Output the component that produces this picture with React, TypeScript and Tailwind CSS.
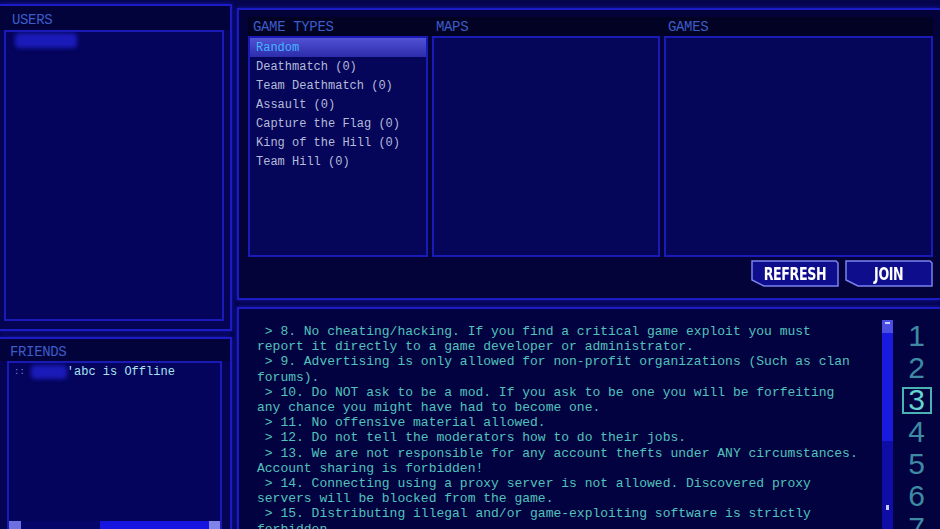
import React from "react";

const mono = "font-['Liberation_Mono','DejaVu_Sans_Mono',monospace]";

const gameTypes = [
  "Random",
  "Deathmatch (0)",
  "Team Deathmatch (0)",
  "Assault (0)",
  "Capture the Flag (0)",
  "King of the Hill (0)",
  "Team Hill (0)",
];

const rules = [
  " > 8. No cheating/hacking. If you find a critical game exploit you must",
  "report it directly to a game developer or administrator.",
  " > 9. Advertising is only allowed for non-profit organizations (Such as clan",
  "forums).",
  " > 10. Do NOT ask to be a mod. If you ask to be one you will be forfeiting",
  "any chance you might have had to become one.",
  " > 11. No offensive material allowed.",
  " > 12. Do not tell the moderators how to do their jobs.",
  " > 13. We are not responsible for any account thefts under ANY circumstances.",
  "Account sharing is forbidden!",
  " > 14. Connecting using a proxy server is not allowed. Discovered proxy",
  "servers will be blocked from the game.",
  " > 15. Distributing illegal and/or game-exploiting software is strictly",
  "forbidden.",
];

const SectionLabel = ({ children }: { children: React.ReactNode }) => (
  <span className={`${mono} text-[14px] leading-none text-[#3d5cc8] tracking-tight`}>{children}</span>
);

const CutButton = ({ label }: { label: string }) => (
  <button className="relative w-[88px] h-[27px] flex items-center justify-center">
    <svg className="absolute inset-0" width="88" height="27" viewBox="0 0 88 27">
      <polygon
        points="1,1 85,1 87,3 87,26 13,26 1,20"
        fill="#0e0e8c"
        stroke="#7b82ee"
        strokeWidth="1.5"
      />
    </svg>
    <span className="relative font-['Liberation_Sans_Narrow','DejaVu_Sans_Condensed','Liberation_Sans',sans-serif] font-bold text-[18px] leading-none text-white tracking-[-0.5px] scale-x-[0.78]">
      {label}
    </span>
  </button>
);

export default function App() {
  return (
    <div className="w-[940px] h-[529px] overflow-hidden bg-[#05054e] flex">
      {/* left column */}
      <div className="w-[232px] shrink-0 flex flex-col">
        <div className="mt-[4px] h-[327px] shrink-0 border-t-2 border-r-2 border-b-2 border-[#1c1cc4] bg-[#040452] flex flex-col shadow-[0_0_4px_#1616b0]">
          <div className="h-[24px] shrink-0 bg-[#03033c] pl-[12px] pt-[4px] flex items-center">
            <SectionLabel>USERS</SectionLabel>
          </div>
          <div className="ml-[4px] mr-[6px] mb-[8px] flex-1 border-2 border-[#1a1ab6] bg-[#04045c] pt-[1px] pl-[9px]">
            <div className="w-[62px] h-[15px] rounded-[4px] bg-[#1a1ab8] blur-[2px]" />
          </div>
        </div>
        <div className="mt-[6px] flex-1 min-h-0 border-t-2 border-r-2 border-[#1c1cc4] bg-[#040452] flex flex-col shadow-[0_0_4px_#1616b0]">
          <div className="h-[22px] shrink-0 bg-[#03033c] pl-[10px] pt-[4px] flex items-center">
            <SectionLabel>FRIENDS</SectionLabel>
          </div>
          <div className="ml-[7px] mr-[8px] flex-1 border-2 border-b-0 border-[#1a1ab6] bg-[#04045c] flex flex-col">
            <div className={`pl-[5px] pt-[2px] ${mono} text-[12px] leading-[14px] text-[#a8e2f2] flex items-center`}>
              <span className="text-[#7a8ad8] text-[9px]">::</span>
              <span className="w-[36px] h-[14px] ml-[6px] rounded-[4px] bg-[#1a1ab8] blur-[2px]" />
              <span className="whitespace-pre">'abc is Offline</span>
            </div>
            <div className="flex-1" />
            <div className="h-[8px] shrink-0 flex items-stretch bg-[#05056a]">
              <div className="w-[12px] bg-[#6c70e0]" />
              <div className="w-[79px]" />
              <div className="w-[109px] bg-[#1616e0]" />
              <div className="flex-1 bg-[#8084e8]" />
            </div>
          </div>
        </div>
      </div>

      {/* right column */}
      <div className="ml-[5px] flex-1 flex flex-col">
        <div className="mt-[8px] h-[292px] shrink-0 border-2 border-r-0 border-[#1c1cc4] bg-[#03033a] pl-[9px] pr-[7px] pt-[7px] shadow-[0_0_4px_#1616b0]">
          <div className="h-[19px] bg-[#020224] flex items-center pb-[3px]">
            <div className="w-[184px] pl-[5px]">
              <SectionLabel>GAME TYPES</SectionLabel>
            </div>
            <div className="w-[232px] pl-[4px]">
              <SectionLabel>MAPS</SectionLabel>
            </div>
            <div className="pl-[4px]">
              <SectionLabel>GAMES</SectionLabel>
            </div>
          </div>
          <div className="h-[221px] flex gap-[4px]">
            <div className="w-[180px] border-2 border-[#1a1ab6] bg-[#05055a] flex flex-col">
              {gameTypes.map((g, i) => (
                <div
                  key={g}
                  className={`h-[19px] flex items-center pl-[6px] ${mono} text-[12px] whitespace-pre ${
                    i === 0
                      ? "bg-gradient-to-b from-[#5252d4] to-[#2c2cac] text-[#46b4ff]"
                      : "text-[#b4bcd8]"
                  }`}
                >
                  {g}
                </div>
              ))}
            </div>
            <div className="w-[228px] border-2 border-[#1a1ab6] bg-[#05055a]" />
            <div className="flex-1 border-2 border-[#1a1ab6] bg-[#05055a]" />
          </div>
          <div className="mt-[3px] flex justify-end gap-[6px]">
            <CutButton label="REFRESH" />
            <CutButton label="JOIN" />
          </div>
        </div>

        <div className="mt-[7px] flex-1 min-h-0 overflow-hidden border-t-2 border-l-2 border-[#1c1cc4] bg-[#020240] flex shadow-[0_0_4px_#1616b0]">
          <div className={`w-[643px] shrink-0 pl-[18px] pt-[15px] ${mono} text-[13px] leading-[15.2px] text-[#52c2bc] whitespace-pre`}>
            {rules.map((l, i) => (
              <div key={i}>{l}</div>
            ))}
          </div>
          <div className="w-[11px] shrink-0 mt-[11px] flex flex-col">
            <div className="h-[13px] shrink-0 bg-[#4a4ee2] flex items-start justify-center pt-[2px]">
              <div className="w-[5px] h-[2px] bg-[#c8ccff]" />
            </div>
            <div className="h-[108px] shrink-0 bg-[#1a1ade]" />
            <div className="flex-1 bg-[#0e0ea6] flex flex-col items-center pt-[64px]">
              <div className="w-[3px] h-[5px] bg-[#c8ccff]" />
            </div>
          </div>
          <div className="flex-1 mt-[11px] flex flex-col items-center font-['Liberation_Sans',sans-serif] text-[30px] leading-none text-[#3d8aa2]">
            {[1, 2, 3, 4, 5, 6, 7].map((n) => (
              <div key={n} className="h-[32px] shrink-0 flex items-center justify-center">
                {n === 3 ? (
                  <span className="w-[30px] h-[27px] border-2 border-[#4ab2b2] flex items-center justify-center text-[#64d4cc]">
                    {n}
                  </span>
                ) : (
                  <span>{n}</span>
                )}
              </div>
            ))}
          </div>
        </div>
      </div>
    </div>
  );
}
